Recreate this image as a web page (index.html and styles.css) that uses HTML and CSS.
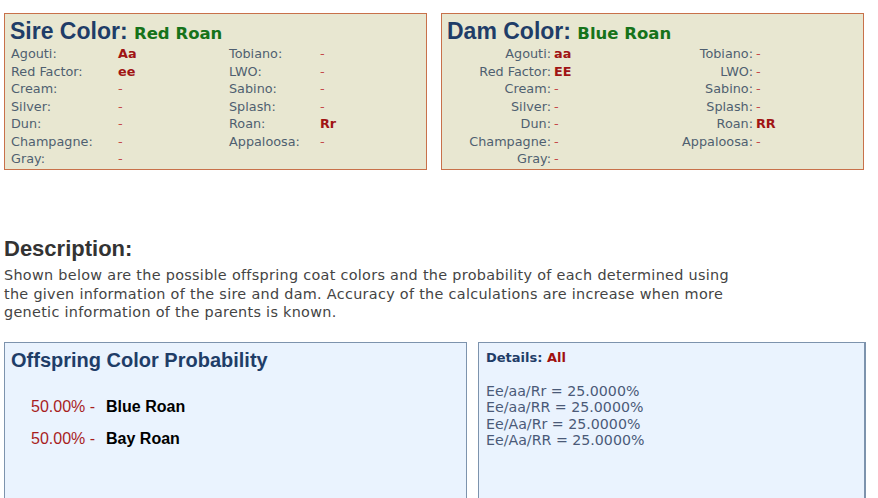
FILE: index.html
```html
<!DOCTYPE html>
<html>
<head>
<meta charset="utf-8">
<link rel="stylesheet" href="styles.css">
</head>
<body>
<div class="page">
  <div class="parents">
    <div class="parent sire">
      <div class="ptitle">Sire Color: <span class="pcolor">Red Roan</span></div>
      <div class="genes">
        <span class="lbl">Agouti:</span><span class="val">Aa</span><span class="lbl">Tobiano:</span><span class="dash">-</span>
        <span class="lbl">Red Factor:</span><span class="val">ee</span><span class="lbl">LWO:</span><span class="dash">-</span>
        <span class="lbl">Cream:</span><span class="dash">-</span><span class="lbl">Sabino:</span><span class="dash">-</span>
        <span class="lbl">Silver:</span><span class="dash">-</span><span class="lbl">Splash:</span><span class="dash">-</span>
        <span class="lbl">Dun:</span><span class="dash">-</span><span class="lbl">Roan:</span><span class="val">Rr</span>
        <span class="lbl">Champagne:</span><span class="dash">-</span><span class="lbl">Appaloosa:</span><span class="dash">-</span>
        <span class="lbl">Gray:</span><span class="dash">-</span>
      </div>
    </div>
    <div class="parent dam">
      <div class="ptitle">Dam Color: <span class="pcolor">Blue Roan</span></div>
      <div class="genes">
        <span class="lbl">Agouti:</span><span class="val">aa</span><span class="lbl">Tobiano:</span><span class="dash">-</span>
        <span class="lbl">Red Factor:</span><span class="val">EE</span><span class="lbl">LWO:</span><span class="dash">-</span>
        <span class="lbl">Cream:</span><span class="dash">-</span><span class="lbl">Sabino:</span><span class="dash">-</span>
        <span class="lbl">Silver:</span><span class="dash">-</span><span class="lbl">Splash:</span><span class="dash">-</span>
        <span class="lbl">Dun:</span><span class="dash">-</span><span class="lbl">Roan:</span><span class="val">RR</span>
        <span class="lbl">Champagne:</span><span class="dash">-</span><span class="lbl">Appaloosa:</span><span class="dash">-</span>
        <span class="lbl">Gray:</span><span class="dash">-</span>
      </div>
    </div>
  </div>

  <div class="desc">
    <h2 class="desc-title">Description:</h2>
    <p class="desc-text">Shown below are the possible offspring coat colors and the probability of each determined using the given information of the sire and dam. Accuracy of the calculations are increase when more genetic information of the parents is known.</p>
  </div>

  <div class="results">
    <div class="rbox offspring">
      <div class="otitle">Offspring Color Probability</div>
      <div class="orow"><span class="pct">50.00% -</span><span class="cname">Blue Roan</span></div>
      <div class="orow"><span class="pct">50.00% -</span><span class="cname">Bay Roan</span></div>
    </div>
    <div class="rbox details">
      <div class="dtitle">Details: <span class="dall">All</span></div>
      <div class="dlist">
        <div>Ee/aa/Rr = 25.0000%</div>
        <div>Ee/aa/RR = 25.0000%</div>
        <div>Ee/Aa/Rr = 25.0000%</div>
        <div>Ee/Aa/RR = 25.0000%</div>
      </div>
    </div>
  </div>
</div>
</body>
</html>
```

FILE: styles.css
```css
html, body {
  margin: 0;
  padding: 0;
  background: #ffffff;
}

.page {
  padding: 13px 0 0 4px;
  font-family: "DejaVu Sans", Verdana, sans-serif;
}

.parents {
  display: flex;
  gap: 14px;
}

.parent {
  box-sizing: border-box;
  width: 423px;
  height: 157px;
  background: #e8e7d1;
  border: 1px solid #c8714a;
  padding: 6px 6px 0 5px;
}

.ptitle {
  font-family: "Liberation Sans", Arial, sans-serif;
  font-weight: bold;
  font-size: 23px;
  line-height: 22px;
  color: #1f3d68;
  white-space: nowrap;
}

.pcolor {
  font-family: "DejaVu Sans", Verdana, sans-serif;
  font-size: 16.5px;
  color: #16731a;
}

.genes {
  display: grid;
  font-size: 12.8px;
  line-height: 17.5px;
  color: #4f5f70;
}

.sire .genes {
  grid-template-columns: 107px 111px 91px 1fr;
  padding-left: 1px;
}

.dam .genes {
  grid-template-columns: 107px 100px 102px 1fr;
}

.dam .lbl {
  text-align: right;
  padding-right: 3px;
}

.val {
  font-weight: bold;
  color: #a01414;
}

.dash {
  color: #c44a4a;
}

.desc {
  margin-top: 66px;
}

.desc-title {
  margin: 0 0 4px 0;
  font-family: "Liberation Sans", Arial, sans-serif;
  font-weight: bold;
  font-size: 22px;
  line-height: 26px;
  color: #333333;
}

.desc-text {
  margin: 0;
  width: 738px;
  font-size: 14.4px;
  letter-spacing: 0.3px;
  line-height: 18.5px;
  color: #444444;
}

.results {
  display: flex;
  gap: 11px;
  margin-top: 20px;
}

.rbox {
  box-sizing: border-box;
  height: 170px;
  background: #eaf3fe;
  border: 1px solid #7d93ad;
}

.offspring {
  width: 463px;
  padding: 5px 6px 0 6px;
}

.details {
  width: 388px;
  padding: 7px 7px 0 7px;
  border-right-width: 2px;
}

.otitle {
  font-family: "Liberation Sans", Arial, sans-serif;
  font-weight: bold;
  font-size: 20px;
  line-height: 24px;
  color: #1f3d68;
  margin-bottom: 19px;
}

.orow {
  font-family: "Liberation Sans", Arial, sans-serif;
  font-size: 16px;
  line-height: 32px;
  padding-left: 20px;
  display: flex;
  gap: 11px;
}

.pct {
  color: #a81e1e;
}

.cname {
  font-weight: bold;
  color: #000000;
}

.dtitle {
  font-weight: bold;
  font-size: 13px;
  line-height: 16px;
  color: #1f3d68;
}

.dall {
  color: #a01010;
}

.dlist {
  margin-top: 17px;
  font-size: 14.2px;
  line-height: 16.5px;
  color: #4a5a78;
}
```
